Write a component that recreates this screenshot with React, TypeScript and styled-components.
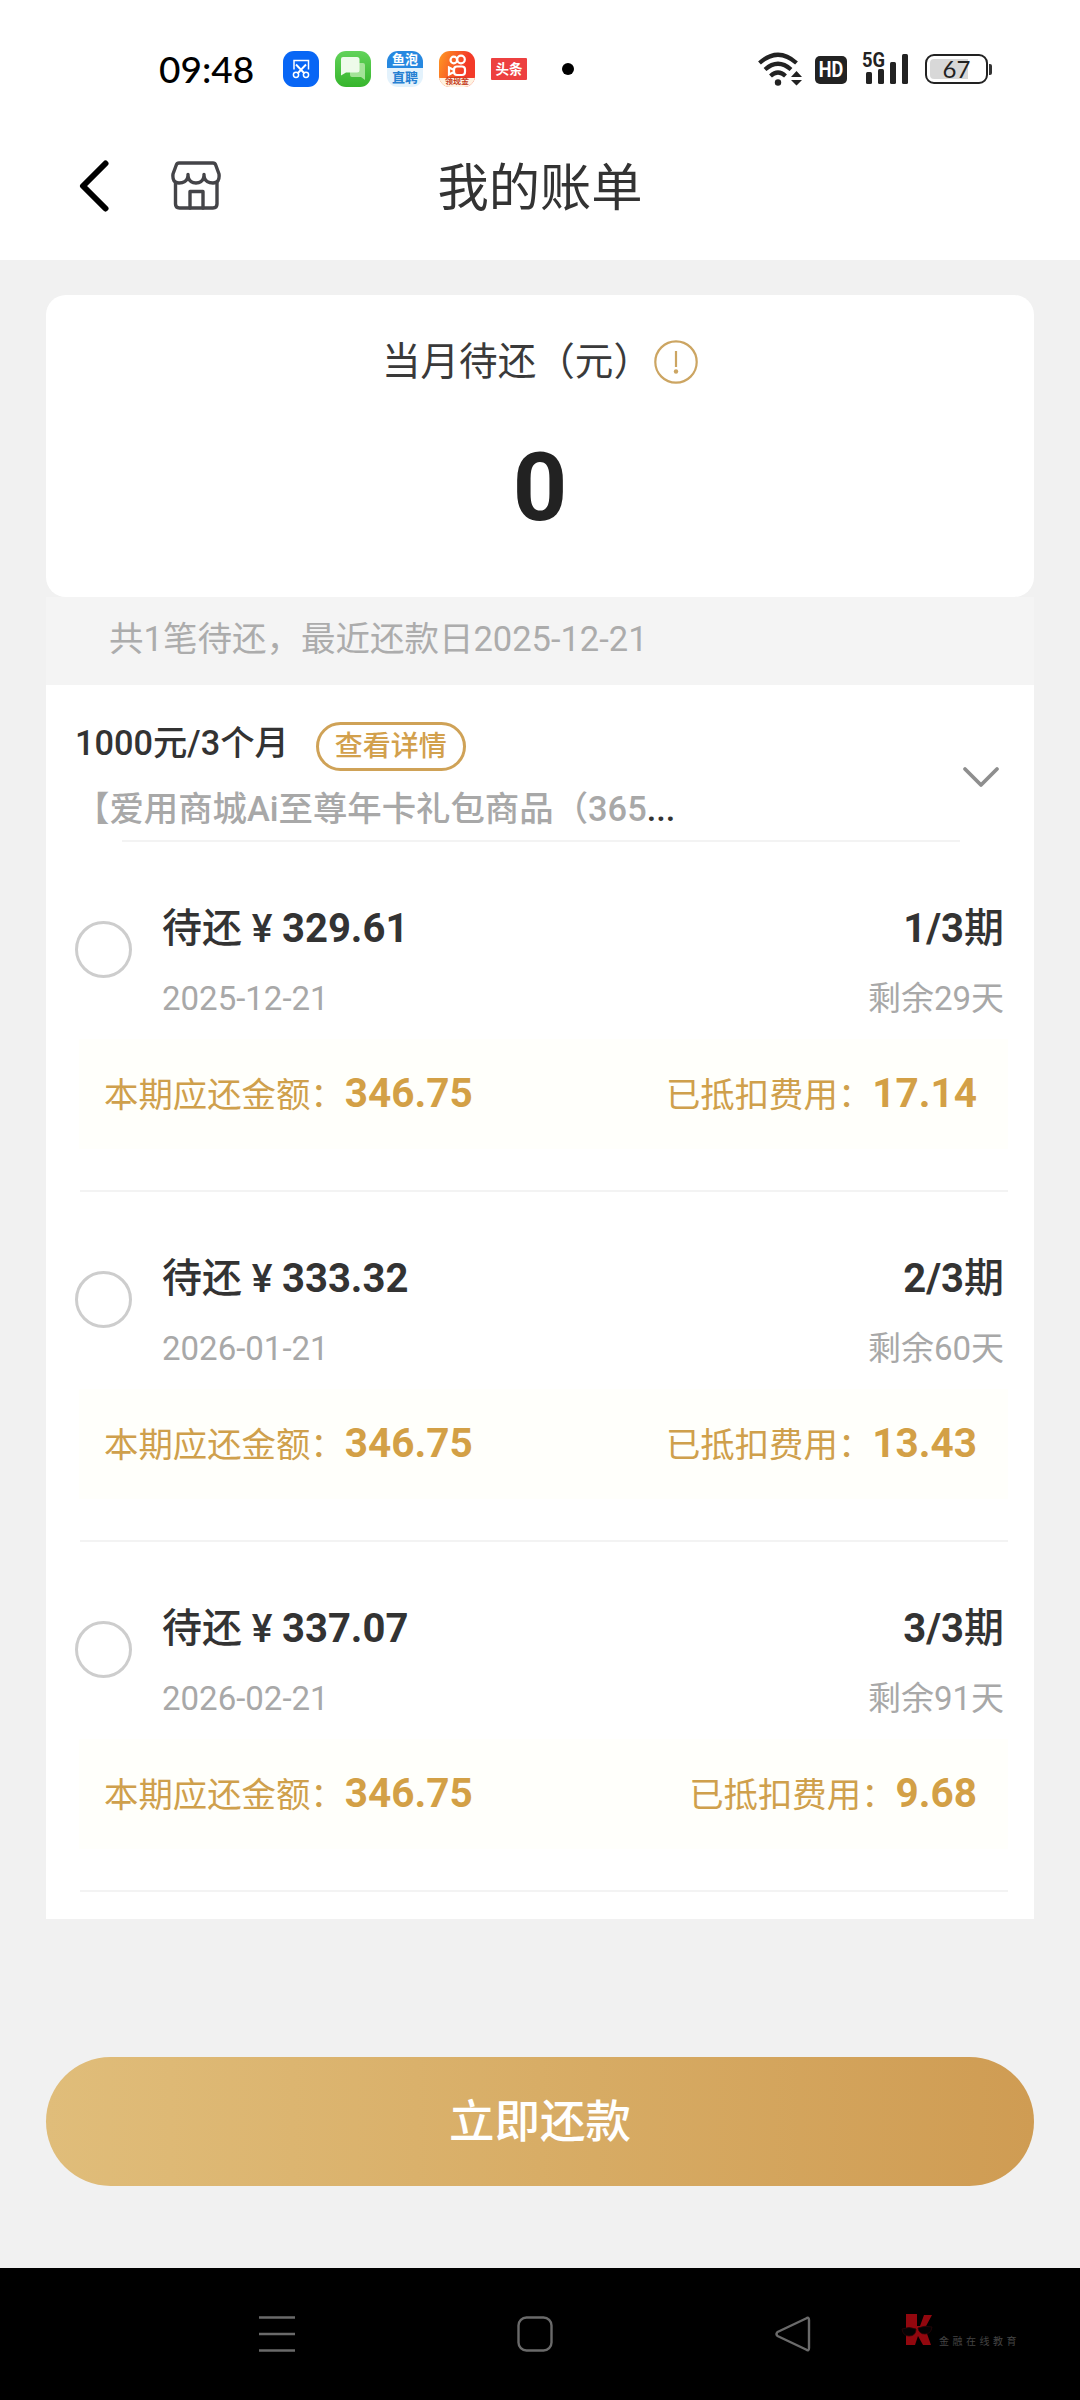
import React from "react";
import styled, { createGlobalStyle } from "styled-components";

const Global = createGlobalStyle`
  *, *::before, *::after { box-sizing: border-box; }
  body { margin: 0; background: #f1f1f1; }
`;

const Screen = styled.div`
  width: 1080px;
  height: 2400px;
  display: flex;
  flex-direction: column;
  background: #f1f1f1;
  color: #333;
  font-family: Roboto, "Noto Sans CJK SC", sans-serif;
  overflow: hidden;
`;

const StatusBar = styled.div`
  height: 112px;
  padding: 26px 88px 0 159px;
  display: flex;
  align-items: center;
  background: #fff;
`;

const Clock = styled.span`
  width: 124px;
  font-family: Lato, sans-serif;
  font-size: 37px;
  font-weight: 500;
  line-height: 40px;
  color: #000;
`;

const AppIcons = styled.div`
  display: flex;
  align-items: center;
  gap: 16px;
`;

const Tile = styled.div<{ $bg: string; $h?: number; $r?: number }>`
  width: 36px;
  height: ${(p) => p.$h ?? 36}px;
  border-radius: ${(p) => p.$r ?? 11}px;
  background: ${(p) => p.$bg};
  display: flex;
  flex-direction: column;
  align-items: center;
  justify-content: center;
  overflow: hidden;
`;

const TileText = styled.span<{ $color: string; $size: number; $line: number }>`
  font-size: ${(p) => p.$size}px;
  line-height: ${(p) => p.$line}px;
  font-weight: 700;
  color: ${(p) => p.$color};
  white-space: nowrap;
`;

const PromoStrip = styled.div`
  width: 36px;
  height: 9px;
  background: #fff3e2;
  display: flex;
  justify-content: center;
`;

const Dot = styled.span`
  width: 12px;
  height: 12px;
  margin-left: 35px;
  border-radius: 50%;
  background: #000;
`;

const Signals = styled.div`
  margin-left: auto;
  display: flex;
  align-items: center;
`;

const HdBadge = styled.div`
  width: 32px;
  height: 28px;
  margin: 1px 0 0 13px;
  border-radius: 5px;
  background: #222;
  display: flex;
  justify-content: center;
`;

const HdText = styled.span`
  font-size: 22px;
  font-weight: 700;
  line-height: 28px;
  color: #fff;
  transform: scaleX(0.82);
`;

const Cell = styled.div`
  width: 48px;
  height: 34px;
  margin: -2px 0 0 15px;
`;

const Battery = styled.div`
  width: 63px;
  height: 30px;
  margin-left: 15px;
  padding: 3px;
  border: 2.5px solid #222;
  border-radius: 9px;
  background: linear-gradient(to right, #d8d8d8 0 38px, #fff 38px) content-box;
  font-family: Lato, sans-serif;
  font-size: 24px;
  line-height: 19px;
  text-align: center;
  color: #222;
`;

const BatteryTip = styled.span`
  width: 3px;
  height: 11px;
  margin-left: 1px;
  border-radius: 0 2px 2px 0;
  background: #333;
`;

const Header = styled.header`
  height: 148px;
  padding: 0 79px;
  display: grid;
  grid-template-columns: 180px 1fr 180px;
  align-items: center;
  background: #fff;
`;

const HeaderIcons = styled.div`
  display: flex;
  align-items: center;
  gap: 60px;
`;

const PageTitle = styled.h1`
  margin: 0;
  padding-top: 5px;
  font-size: 51.3px;
  font-weight: 400;
  line-height: 74px;
  text-align: center;
  color: #333;
`;

const Content = styled.main`
  flex: 1;
  padding: 35px 46px 0;
  display: flex;
  flex-direction: column;
`;

const DueCard = styled.section`
  height: 302px;
  padding-top: 39px;
  border-radius: 20px;
  background: #fff;
  display: flex;
  flex-direction: column;
  align-items: center;
`;

const DueLabel = styled.div`
  display: flex;
  align-items: center;
  gap: 2px;
  height: 56px;
  font-size: 38.6px;
  line-height: 56px;
  color: #3a3a3a;
`;

const DueAmount = styled.strong`
  margin-top: 43px;
  font-size: 95px;
  font-weight: 700;
  line-height: 110px;
  color: #222;
`;

const Notice = styled.p`
  height: 88px;
  margin: 0;
  padding: 17px 63px 0;
  background: #f4f4f4;
  font-size: 34.5px;
  line-height: 50px;
  color: #acacac;
`;

const Bills = styled.section`
  height: 1234px;
  padding: 0 26px 0 30px;
  background: #fff;
`;

const LoanHead = styled.div`
  height: 155px;
  padding-top: 34px;
  display: flex;
  justify-content: space-between;
`;

const LoanTitle = styled.div`
  display: flex;
  align-items: center;
  gap: 27px;
  height: 54px;
  margin-left: -1px;
  font-size: 34.3px;
  font-weight: 500;
  color: #333;
`;

const LoanName = styled.span`
  height: 54px;
  line-height: 49px;
`;

const DetailPill = styled.button`
  width: 150px;
  height: 49px;
  padding: 1px 0 0;
  border: 3px solid #cfa257;
  border-radius: 25px;
  background: #fff;
  font: 500 28px/42px Roboto, "Noto Sans CJK SC", sans-serif;
  color: #d2a04c;
`;

const Product = styled.div`
  font-size: 34.4px;
  font-weight: 500;
  line-height: 50px;
  margin: 11px 0 0 -1px;
  color: #a8a8a8;
  white-space: nowrap;
`;

const Ellipsis = styled.span`
  color: #333;
`;

const Toggle = styled.div`
  padding: 47px 8px 0 0;
`;

const Rule = styled.hr<{ $left: number; $right: number }>`
  height: 2px;
  margin: 0 ${(p) => p.$right}px 0 ${(p) => p.$left}px;
  border: 0;
  background: #f3f3f3;
`;

const Installment = styled.article`
  height: 350px;
  display: flex;
  flex-direction: column;
`;

const Info = styled.div`
  height: 197px;
  padding: 58px 4px 0 0;
  display: grid;
  grid-template-columns: 86px 1fr auto;
  color: #333;
`;

const Radio = styled.span`
  width: 57px;
  height: 57px;
  margin: 21px 0 0 -1px;
  border: 3px solid #cdcdcd;
  border-radius: 50%;
`;

const InfoColumn = styled.div<{ $end?: boolean }>`
  display: flex;
  flex-direction: column;
  align-items: ${(p) => (p.$end ? "flex-end" : "flex-start")};
`;

const Due = styled.span`
  height: 58px;
  font-size: 40px;
  font-weight: 500;
  line-height: 58px;
  white-space: nowrap;
`;

const Yen = styled.span`
  display: inline-block;
  width: 40px;
  font-size: 39px;
  text-align: center;
`;

const Figure = styled.span`
  font-weight: 700;
`;

const Sub = styled.span`
  margin-top: 17px;
  font-size: 33px;
  line-height: 48px;
  color: #a8a8a8;
`;

const Band = styled.div`
  height: 110px;
  margin: 0 0 0 3px;
  padding: 0 31px 0 25px;
  display: flex;
  align-items: center;
  justify-content: space-between;
  background: #fffffb;
  font-size: 34.4px;
  line-height: 50px;
  color: #cfa04c;
`;

const BandItem = styled.span`
  display: flex;
  align-items: baseline;
`;

const BandFigure = styled.span`
  font-size: 40.5px;
  font-weight: 700;
  color: #d3a046;
`;

const RowEnd = styled.div`
  flex: 1;
  display: flex;
  flex-direction: column;
  justify-content: flex-end;
`;

const PayButton = styled.button`
  height: 129px;
  margin-top: 138px;
  padding: 3px 0 0;
  border: 0;
  border-radius: 65px;
  background: linear-gradient(90deg, #e0bd7a 0%, #d8ad66 50%, #cf9c53 100%);
  font: 500 45.5px/66px Roboto, "Noto Sans CJK SC", sans-serif;
  color: #fff;
`;

const NavBar = styled.nav`
  height: 132px;
  padding: 0 50px 0 259px;
  display: flex;
  align-items: center;
  background: #000;
`;

const NavIcons = styled.div`
  width: 552px;
  display: flex;
  justify-content: space-between;
`;

const Brand = styled.div`
  margin-left: 89px;
  margin-top: -6px;
  display: flex;
  align-items: flex-end;
  gap: 5px;
`;

const BrandName = styled.span`
  font-size: 10px;
  line-height: 15px;
  letter-spacing: 3.5px;
  color: #444;
  white-space: nowrap;
`;

const ScissorsIcon = () => (
  <svg width="36" height="36" viewBox="0 0 36 36" fill="none" stroke="#fff" strokeWidth="1.500">
    <path d="M11 18.500V9.500H25.500V18.500" />
    <path d="M13 13.500L21.500 22.500M23 13.500L14.500 22.500" strokeWidth="1.900" />
    <circle cx="13" cy="23.800" r="2.600" />
    <circle cx="23" cy="23.800" r="2.600" />
  </svg>
);

const ChatIcon = () => (
  <svg width="36" height="36" viewBox="0 0 36 36">
    <path d="M15 12h13q2 0 2 2v15l-4-3H17q-2 0-2-2z" fill="#b4e9a8" opacity=".85" />
    <path d="M8 6h14q2.500 0 2.500 2.500V19q0 2.500-2.500 2.500H11l-5 3V8q0-2 2-2z" fill="#eefbea" />
  </svg>
);

const CameraIcon = () => (
  <svg width="36" height="27" viewBox="0 0 36 27" fill="none" stroke="#fff" strokeWidth="2.200">
    <circle cx="14.800" cy="9" r="3.300" />
    <circle cx="22" cy="8.500" r="3.800" />
    <rect x="15" y="15.500" width="11" height="8.500" rx="3" />
    <path d="M15 19l-5-2.500v7l5-2.500" />
  </svg>
);

const WifiIcon = () => (
  <svg width="44" height="34" viewBox="0 0 44 34" fill="none" stroke="#222" strokeWidth="4.200">
    <path d="M1.500 11Q20 -5.500 38.500 11" />
    <path d="M7 17.500Q20 6 33 17.500" />
    <path d="M12.500 24Q20 17 27.500 24" />
    <circle cx="20" cy="30.500" r="3.200" fill="#222" stroke="none" />
    <path d="M38.500 19l5.500 6H33zM38.500 33.500l5.500-5.500H33z" fill="#222" stroke="none" />
  </svg>
);

const CellIcon = () => (
  <svg width="48" height="34" viewBox="0 0 48 34" overflow="visible">
    <text x="0" y="16" fontFamily="Roboto, sans-serif" fontSize="20" fontWeight="700" textLength="23" lengthAdjust="spacingAndGlyphs" fill="#222">5G</text>
    <g fill="#222">
      <rect x="4" y="21" width="6" height="12" rx="1.500" />
      <rect x="16" y="18" width="6" height="15" rx="1.500" />
      <rect x="28" y="11" width="6" height="22" rx="1.500" />
      <rect x="40" y="3" width="6" height="30" rx="1.500" />
    </g>
  </svg>
);

const BackIcon = () => (
  <svg width="32" height="54" viewBox="0 0 32 54" fill="none" stroke="#000" strokeWidth="6" strokeLinecap="round" strokeLinejoin="round">
    <path d="M26.500 4.500L4 27L26.500 49.500" />
  </svg>
);

const StoreIcon = () => (
  <svg width="50" height="50" viewBox="0 0 50 50" fill="none" stroke="#444448" strokeWidth="3.400" strokeLinejoin="round" strokeLinecap="round">
    <path d="M8 2H42Q44 2 44.700 4L48 13Q49 22 42 22Q35 22 33 16Q31 22 25 22Q19 22 17 16Q15 22 8 22Q1 22 2 13L5.300 4Q6 2 8 2Z" />
    <path d="M17 16V13.500M33 16V13.500M4.500 22V43Q4.500 47 8.500 47H42Q46 47 46 43V22" />
    <path d="M19 47V30.500H32V47" />
  </svg>
);

const NoticeIcon = () => (
  <svg width="44" height="44" viewBox="0 0 44 44">
    <circle cx="22" cy="22" r="20.700" fill="none" stroke="#cca562" strokeWidth="2.200" />
    <path d="M22 11V27" stroke="#cca562" strokeWidth="2.200" />
    <circle cx="22" cy="31.500" r="2.200" fill="#cca562" />
  </svg>
);

const DownIcon = () => (
  <svg width="38" height="24" viewBox="0 0 38 24" fill="none" stroke="#8e8e8e" strokeWidth="3.800" strokeLinecap="round" strokeLinejoin="round">
    <path d="M3 3L19 19L35 3" />
  </svg>
);

const MenuIcon = () => (
  <svg width="36" height="38" viewBox="0 0 36 38" stroke="#6a6a6a" strokeWidth="2.600">
    <path d="M0 2.500H36M0 19H36M0 35.500H36" />
  </svg>
);

const HomeIcon = () => (
  <svg width="36" height="38" viewBox="0 0 36 38" fill="none" stroke="#6a6a6a" strokeWidth="2.400">
    <rect x="1.500" y="2.500" width="33" height="33" rx="8" />
  </svg>
);

const ReturnIcon = () => (
  <svg width="36" height="38" viewBox="0 0 36 38" fill="none" stroke="#6a6a6a" strokeWidth="2.400" strokeLinejoin="round">
    <path d="M31 3.500Q34 1.500 34 5V33Q34 36.500 31 34.500L2.500 21Q.5 19 2.500 17Z" />
  </svg>
);

const BrandIcon = () => (
  <svg width="34" height="36" viewBox="0 0 34 36">
    <path d="M6 1h11v12h3l4-11h8l-7 13 6 17h-8l-5-9-3 9H6z" fill="#92070e" />
    <g fill="#050304" stroke="#2a0507" strokeWidth=".8">
      <path d="M2 16q7-3 14 0 0 7-7 7-6 0-7-7z" />
      <path d="M18 15q7-3 14-1-1 7-7 7-6 0-7-6z" />
    </g>
  </svg>
);

const installments = [
  { due: "329.61", period: "1/3", date: "2025-12-21", left: "剩余29天", total: "346.75", off: "17.14" },
  { due: "333.32", period: "2/3", date: "2026-01-21", left: "剩余60天", total: "346.75", off: "13.43" },
  { due: "337.07", period: "3/3", date: "2026-02-21", left: "剩余91天", total: "346.75", off: "9.68" },
];

export default function App() {
  return (
    <Screen>
      <Global />
      <StatusBar>
        <Clock>09:48</Clock>
        <AppIcons>
          <Tile $bg="#0866f5"><ScissorsIcon /></Tile>
          <Tile $bg="linear-gradient(#62d35a, #36b52c)"><ChatIcon /></Tile>
          <Tile $bg="linear-gradient(#2688e0 0 17px, #e3f2fc 17px)">
            <TileText $color="#fff" $size={13} $line={18}>鱼泡</TileText>
            <TileText $color="#2580d2" $size={13} $line={18}>直聘</TileText>
          </Tile>
          <Tile $bg="linear-gradient(110deg, #ff9a22, #f33a28 65%)">
            <CameraIcon />
            <PromoStrip><TileText $color="#c33a20" $size={8} $line={8}>领现金</TileText></PromoStrip>
          </Tile>
          <Tile $bg="#ed4040" $h={22} $r={1}>
            <TileText $color="#fff" $size={13.5} $line={20}>头条</TileText>
          </Tile>
        </AppIcons>
        <Dot />
        <Signals>
          <WifiIcon />
          <HdBadge><HdText>HD</HdText></HdBadge>
          <Cell><CellIcon /></Cell>
          <Battery>67</Battery>
          <BatteryTip />
        </Signals>
      </StatusBar>
      <Header>
        <HeaderIcons><BackIcon /><StoreIcon /></HeaderIcons>
        <PageTitle>我的账单</PageTitle>
      </Header>
      <Content>
        <DueCard>
          <DueLabel>当月待还（元）<NoticeIcon /></DueLabel>
          <DueAmount>0</DueAmount>
        </DueCard>
        <Notice>共1笔待还，最近还款日2025-12-21</Notice>
        <Bills>
          <LoanHead>
            <div>
              <LoanTitle><LoanName>1000元/3个月</LoanName><DetailPill>查看详情</DetailPill></LoanTitle>
              <Product>【爱用商城Ai至尊年卡礼包商品（365<Ellipsis>...</Ellipsis></Product>
            </div>
            <Toggle><DownIcon /></Toggle>
          </LoanHead>
          <Rule $left={46} $right={48} />
          {installments.map((it) => (
            <Installment key={it.period}>
              <Info>
                <Radio />
                <InfoColumn>
                  <Due>待还<Yen>¥</Yen><Figure>{it.due}</Figure></Due>
                  <Sub>{it.date}</Sub>
                </InfoColumn>
                <InfoColumn $end>
                  <Due><Figure>{it.period}</Figure>期</Due>
                  <Sub>{it.left}</Sub>
                </InfoColumn>
              </Info>
              <Band>
                <BandItem>本期应还金额：<BandFigure>{it.total}</BandFigure></BandItem>
                <BandItem>已抵扣费用：<BandFigure>{it.off}</BandFigure></BandItem>
              </Band>
              <RowEnd><Rule $left={4} $right={0} /></RowEnd>
            </Installment>
          ))}
        </Bills>
        <PayButton>立即还款</PayButton>
      </Content>
      <NavBar>
        <NavIcons><MenuIcon /><HomeIcon /><ReturnIcon /></NavIcons>
        <Brand><BrandIcon /><BrandName>金融在线教育</BrandName></Brand>
      </NavBar>
    </Screen>
  );
}
